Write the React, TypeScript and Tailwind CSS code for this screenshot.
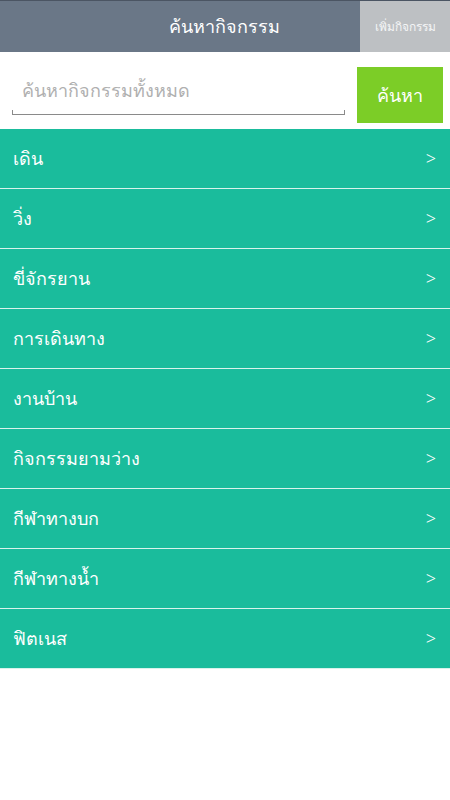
import React from "react";

const items = [
  "เดิน",
  "วิ่ง",
  "ขี่จักรยาน",
  "การเดินทาง",
  "งานบ้าน",
  "กิจกรรมยามว่าง",
  "กีฬาทางบก",
  "กีฬาทางน้ำ",
  "ฟิตเนส",
];

export default function App() {
  return (
    <div
      className="w-[450px] h-[800px] bg-white flex flex-col"
      style={{ fontFamily: '"Noto Sans", "DejaVu Sans", Roboto, sans-serif' }}
    >
      <div className="h-[52px] flex bg-[#6a7787] border-t border-[#4b5563]">
        <div className="flex-1 flex items-center justify-end pr-[80px] text-white text-[18px]">
          ค้นหากิจกรรม
        </div>
        <div className="w-[90px] bg-[#bdc0c3] flex items-center justify-center text-[#f4f5f6] text-[12px]">
          เพิ่มกิจกรรม
        </div>
      </div>
      <div className="h-[77px] flex items-start pl-[12px] pr-[7px] pt-[15px] gap-[12px]">
        <div className="flex-1 h-[48px] flex items-center pl-[10px] text-[#b0b0b0] text-[18px] font-light border-b border-[#8a8a8a] relative">
          ค้นหากิจกรรมทั้งหมด
          <div className="absolute left-0 bottom-0 w-px h-[4px] bg-[#8a8a8a]" />
          <div className="absolute right-0 bottom-0 w-px h-[4px] bg-[#8a8a8a]" />
        </div>
        <div className="w-[86px] h-[56px] bg-[#7ccd27] flex items-center justify-center text-white text-[18px]">
          ค้นหา
        </div>
      </div>
      <div className="flex flex-col">
        {items.map((t) => (
          <div
            key={t}
            className="h-[60px] bg-[#1abc9c] border-b border-[#d8f3ec] flex items-center justify-between pl-[13px] pr-[14px] text-white text-[18px] font-light"
          >
            <span>{t}</span>
            <span className="text-[18px]">&gt;</span>
          </div>
        ))}
      </div>
    </div>
  );
}
